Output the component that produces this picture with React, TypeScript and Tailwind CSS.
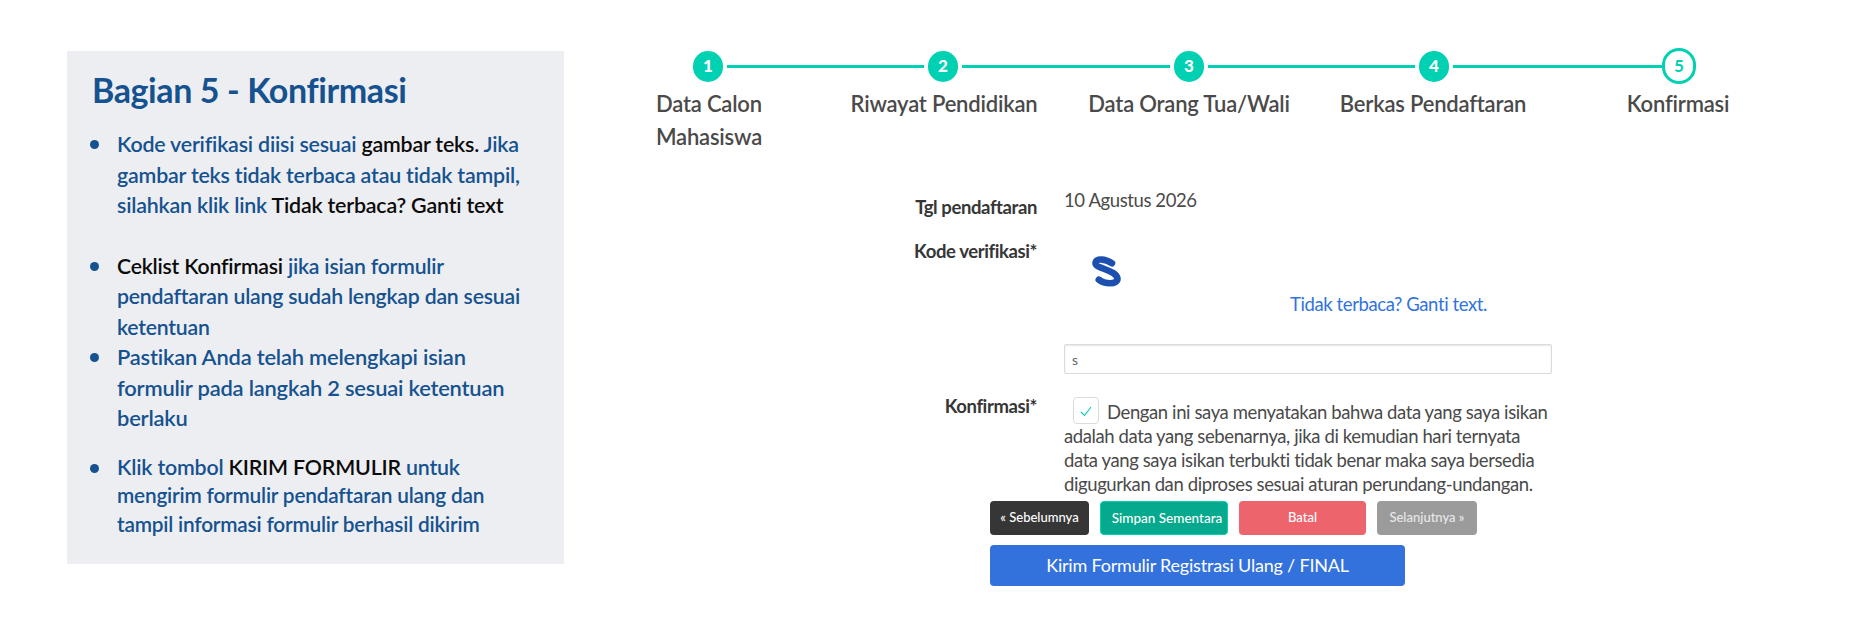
const B = "text-[#15528f]";
const K = "text-[#0b0b0b]";
const Dot = () => <span className="absolute -left-[2px] top-[11px] w-[9px] h-[9px] rounded-full bg-[#15528f]" />;
const circle = "w-[30px] h-[31px] rounded-full bg-[#00d1b2] ring-[4px] ring-white text-white flex items-center justify-center text-[17px] font-black";

export default function App() {
  return (
    <div className="w-[1858px] h-[640px] bg-white flex font-['Lato',sans-serif] overflow-hidden">
      <div className="ml-[67px] mt-[51px] w-[497px] h-[513px] bg-[#edeef1] pl-[25px] pr-[34px] pt-[17px] shrink-0">
        <h1 className={`text-[34px] leading-[44px] font-bold tracking-[-0.4px] ${B}`}>Bagian 5 - Konfirmasi</h1>
        <ul className={`mt-[17px] text-[21.4px] leading-[30.5px] font-semibold tracking-[-0.2px] ${B}`}>
          <li className="relative pl-[25px] mb-[30px]">
            <Dot />
            Kode verifikasi diisi sesuai <span className={K}>gambar teks.</span> Jika gambar teks tidak terbaca atau tidak tampil, silahkan klik link <span className={K}>Tidak terbaca? Ganti text</span>
          </li>
          <li className="relative pl-[25px] text-[21.2px]">
            <Dot />
            <span className={K}>Ceklist Konfirmasi</span> jika isian formulir pendaftaran ulang sudah lengkap dan sesuai ketentuan
          </li>
          <li className="relative pl-[25px] mb-[19px] text-[21.9px]">
            <Dot />
            Pastikan Anda telah melengkapi isian formulir pada langkah 2 sesuai ketentuan berlaku
          </li>
          <li className="relative pl-[25px] leading-[28.5px]">
            <Dot />
            Klik tombol <span className={K}>KIRIM FORMULIR</span> untuk <span className="text-[20.8px]">mengirim formulir pendaftaran ulang dan tampil informasi formulir berhasil dikirim</span>
          </li>
        </ul>
      </div>

      <div className="ml-[92px] mt-[48px] w-[1150px] shrink-0">
        <div className="relative h-[36px] w-[1040px]">
          <div className="absolute left-[68px] right-[20px] top-[17px] h-[3px] bg-[#00d1b2]" />
          <div className="relative flex items-center h-[36px] pl-[37px]">
            <div className={circle}>1</div>
            <div className={`ml-[205px] ${circle}`}>2</div>
            <div className={`ml-[216px] ${circle}`}>3</div>
            <div className={`ml-[215px] ${circle}`}>4</div>
            <div className="ml-[213px] w-[34px] h-[36px] rounded-full border-[3px] border-[#00d1b2] bg-white text-[#00d1b2] flex items-center justify-center text-[17px] font-bold">5</div>
          </div>
        </div>
        <div className="flex mt-[3px] text-[22px] leading-[33px] font-semibold text-[#4a4a4a] tracking-[-0.2px]">
          <div className="w-[147px]">Data Calon Mahasiswa</div>
          <div className="ml-[41px] w-[200px] text-center whitespace-nowrap">Riwayat Pendidikan</div>
          <div className="ml-[40px] w-[210px] text-center whitespace-nowrap">Data Orang Tua/Wali</div>
          <div className="ml-[34px] w-[210px] text-center whitespace-nowrap">Berkas Pendaftaran</div>
          <div className="ml-[38px] w-[204px] text-center whitespace-nowrap">Konfirmasi</div>
        </div>

        <div className="mt-[36px] ml-[219px] flex text-[18.5px] leading-[22px] tracking-[-0.4px] text-[#4a4a4a]">
          <div className="w-[162px] text-right font-bold text-[#363636] pt-[7px]">Tgl pendaftaran</div>
          <div className="ml-[27px]">10 Agustus 2026</div>
        </div>
        <div className="mt-[22px] ml-[219px] flex text-[18.5px] leading-[22px] tracking-[-0.4px]">
          <div className="w-[162px] text-right font-bold text-[#363636]">Kode verifikasi*</div>
          <div className="ml-[27px] w-[488px]">
            <svg width="33" height="34" viewBox="0 0 30 30" className="ml-[26px] mt-[15px] block">
              <path d="M20 7 C14 3 5 2 5 7 C5 12 24 13 25 21 C25 27 13 26 8 22" fill="none" stroke="#1c4fb0" strokeWidth="6" strokeLinecap="round" strokeLinejoin="round" />
            </svg>
            <div className="mt-[4px] text-[#3273dc] pl-[226px]">Tidak terbaca? Ganti text.</div>
            <input readOnly value="s" className="mt-[29px] block w-full h-[30px] border border-[#dbdbdb] rounded-[2px] px-[7px] text-[14px] text-[#666666] shadow-[inset_0_1px_2px_rgba(10,10,10,0.1)] outline-none" />
          </div>
        </div>
        <div className="mt-[19px] ml-[219px] flex text-[18.5px] leading-[22px] tracking-[-0.4px]">
          <div className="w-[162px] text-right font-bold text-[#363636] mt-[2px]">Konfirmasi*</div>
          <div className="ml-[27px] w-[490px] text-[#4a4a4a] leading-[24px] pt-[7px]">
            <span className="inline-flex align-top w-[26px] h-[27px] -mt-[3px] border border-[#dbdbdb] rounded-[4px] items-center justify-center ml-[9px] mr-[8px]">
              <svg width="14" height="14" viewBox="0 0 14 14"><path d="M2 8l3.5 3.5L12 3" fill="none" stroke="#00d1b2" strokeWidth="1.1" /></svg>
            </span>
            Dengan ini saya menyatakan bahwa data yang saya isikan adalah data yang sebenarnya, jika di kemudian hari ternyata data yang saya isikan terbukti tidak benar maka saya bersedia digugurkan dan diproses sesuai aturan perundang-undangan.
          </div>
        </div>
        <div className="mt-[5px] ml-[334px] flex flex-col">
          <div className="flex gap-[11px] text-[13px] text-white font-medium">
            <button className="w-[99px] h-[34px] rounded-[4px] bg-[#363636]">« Sebelumnya</button>
            <button className="w-[128px] h-[34px] rounded-[4px] bg-[#05a98d] border border-[#00d1b2] pl-[6px] text-[13.5px]">Simpan Sementara</button>
            <button className="w-[127px] h-[34px] rounded-[4px] bg-[#ee646c]">Batal</button>
            <button className="w-[100px] h-[34px] rounded-[4px] bg-[#9b9b9b] text-[#e8e8e8]">Selanjutnya »</button>
          </div>
          <button className="mt-[10px] w-[415px] h-[41px] rounded-[4px] bg-[#3371dc] text-white text-[18px] tracking-[-0.2px]">Kirim Formulir Registrasi Ulang / FINAL</button>
        </div>
      </div>
    </div>
  );
}
